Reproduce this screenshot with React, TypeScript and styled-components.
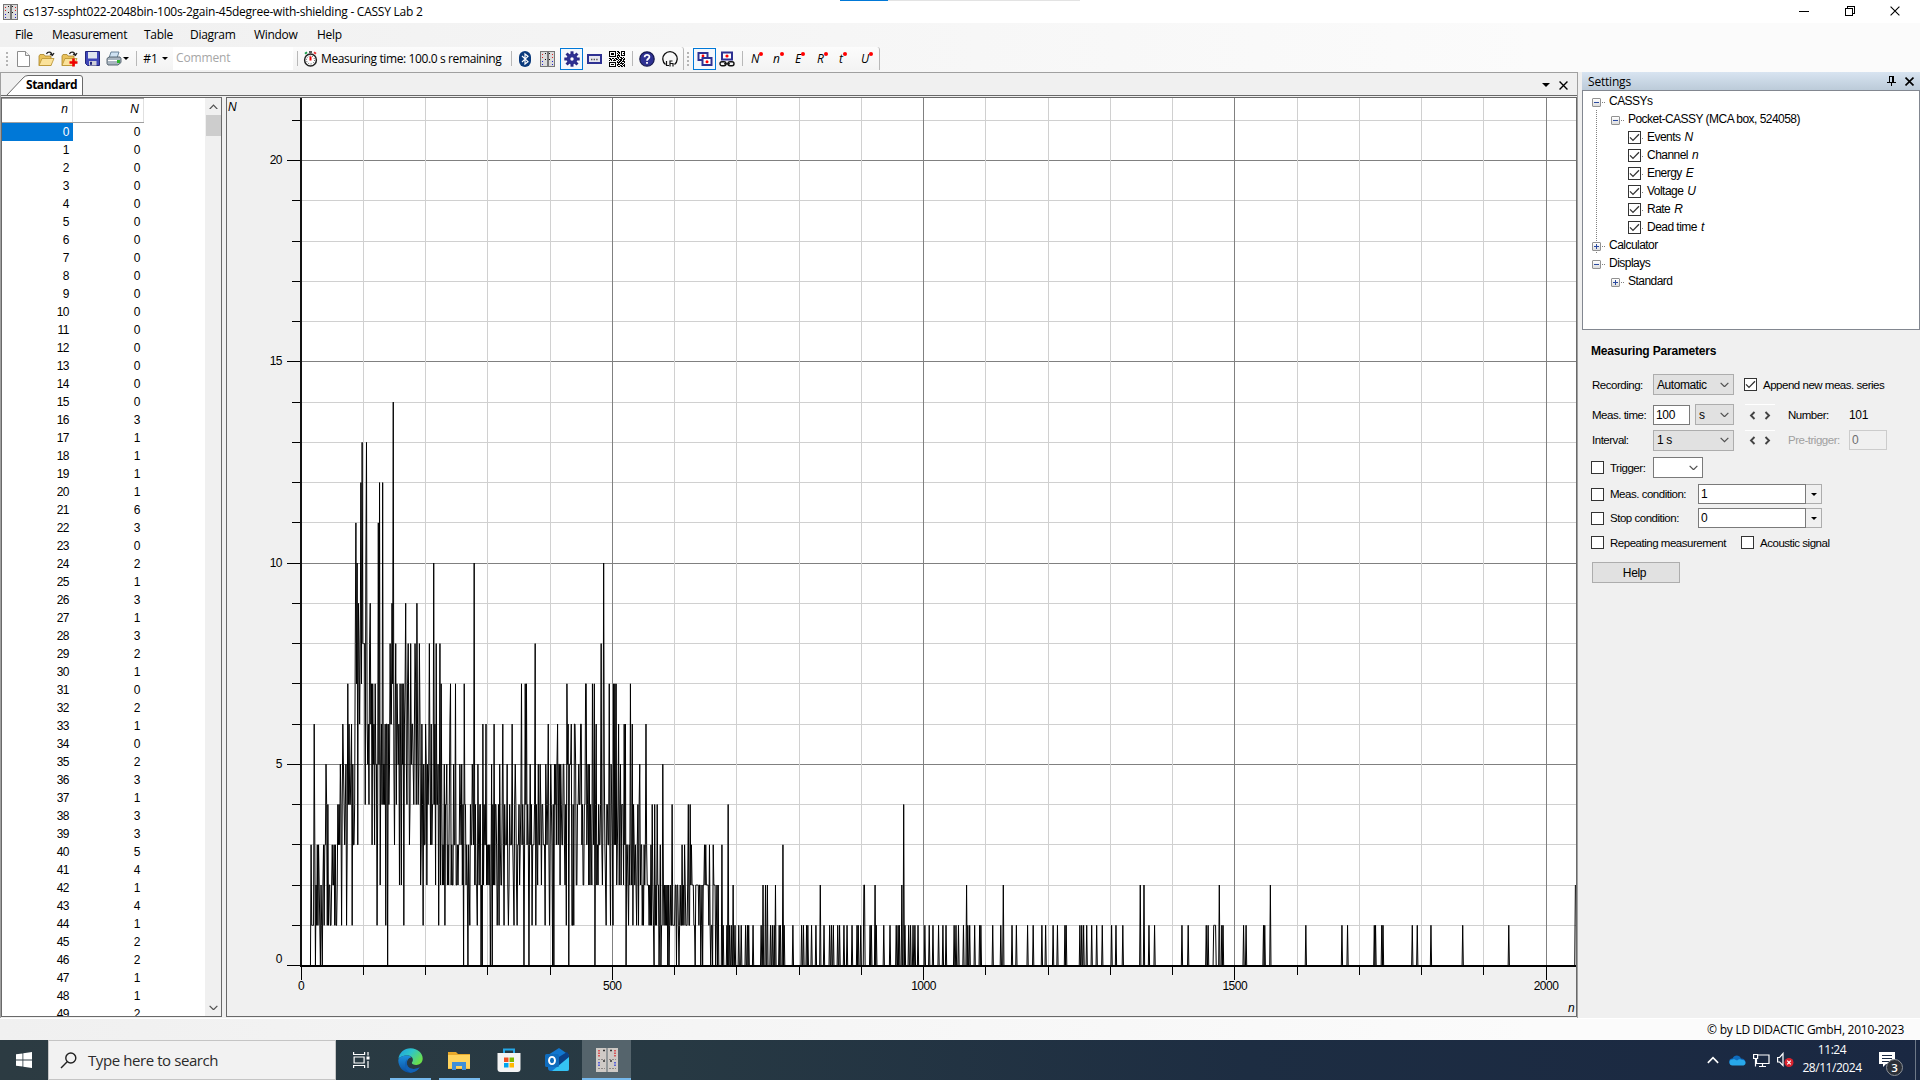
import React from "react";
import styled, { createGlobalStyle, css } from "styled-components";

const UI = `"Open Sans", "Noto Sans", sans-serif`;
const SANS = `"Liberation Sans", Arial, sans-serif`;

const Global = createGlobalStyle`
  html, body { margin: 0; padding: 0; }
  body { width: 1920px; height: 1080px; overflow: hidden; background: #f0f0f0; }
  * { box-sizing: border-box; }
  svg { flex: none; }
`;

/* ---------- spectrum data ---------- */

const firstCounts = [
  0, 0, 0, 0, 0, 0, 0, 0, 0, 0, 0, 0, 0, 0, 0, 0, 3, 1, 1, 1, 1, 6, 3, 0, 2, 1, 3, 1, 3, 2, 1, 0, 2, 1, 0, 2, 3, 1,
  3, 3, 5, 4, 1, 4, 1, 2, 2, 1, 1, 2,
];

type Strip = { origin: number; marks: [number, number[]][] };
const STEP = 1.868;

const strips: Strip[] = [
  {
    origin: -17.7,
    marks: [
      [14, [309]],
      [13, [216, 230]],
      [12, [212, 269, 277]],
      [11, [197, 265]],
      [10, [201, 227, 431, 552]],
      [9, [205, 240, 305, 346, 380]],
      [8, [223, 301, 317, 354, 362, 375, 388, 417, 439, 449, 735]],
      [0, [292, 521, 533, 572, 576, 601, 607, 701, 716, 788, 791, 836]],
      [7, [173, 247, 256, 331, 340, 453, 481, 496, 520, 695, 705, 709, 830, 886]],
      [1, [155, 169, 187, 261, 287, 341, 399, 446, 465, 540, 561, 621, 627, 642, 656, 671, 681, 726, 737, 765, 778, 829, 845, 851]],
      [6, [158, 177, 184, 285, 295, 322, 395, 407, 424, 434, 480, 578, 587, 613, 638, 666, 775, 803, 834, 843, 854, 871]],
      [5, [150, 273, 463, 470, 490, 509, 515, 547, 563, 604, 627, 652, 676, 720, 745, 750, 767, 808, 819, 895]],
      [2, [130, 271, 328, 334, 391, 410, 436, 451, 471, 484, 487, 499, 567, 580, 688, 743, 755, 811, 825, 859, 880, 897]],
      [3, [127, 145, 163, 190, 203, 246, 253, 313, 359, 403, 421, 459, 505, 545, 711, 760, 815, 875]],
      [4, [144, 162, 193, 225, 236, 276, 280, 297, 319, 350, 371, 385, 415, 428, 442, 527, 570, 583, 617, 643, 672, 733, 757, 795]],
    ],
  },
  {
    origin: 432,
    marks: [
      [10, [100]],
      [8, [93]],
      [7, [46, 67, 72, 117, 130, 135, 139, 182]],
      [0, [74, 168, 252, 267, 272, 293, 297, 320, 327, 375, 392, 397, 422, 427, 437, 442, 448, 452]],
      [6, [3, 14, 31, 79, 146, 162, 166, 186, 227]],
      [1, [6, 11, 109, 122, 128, 175, 189, 200, 206, 217, 220, 237, 260, 289, 303, 312, 349, 371]],
      [5, [56, 103, 124, 151, 210, 279]],
      [4, [8, 24, 35, 61, 77, 86, 112, 158, 189, 204, 208, 246, 253, 261, 307, 354, 360, 474]],
      [2, [20, 41, 60, 65, 80, 84, 98, 107, 140, 145, 153, 159, 233, 287, 315, 319, 330, 380, 388, 396, 411, 415, 435, 443, 490, 580, 587, 592, 617, 751, 882]],
      [3, [171, 215, 243, 271, 336, 343, 365, 403, 407, 419, 430, 455, 638]],
      [1, [460, 470, 478, 484, 495, 507, 513, 527, 532, 537, 549, 574, 602, 608, 613, 627, 631, 642, 668, 694, 700, 709, 713, 724, 737, 763, 779, 785, 791, 803, 809, 822, 831, 847, 861, 865]],
    ],
  },
  {
    origin: 897.5,
    marks: [
      [4, [132]],
      [2, [12, 46, 127, 321, 431, 841, 853, 1079]],
      [1, [2, 30, 34, 50, 72, 91, 110, 115, 119, 136, 146, 152, 159, 166, 175, 195, 208, 220, 237, 250, 259, 283, 288, 296, 311, 325, 330, 345, 359, 364, 398, 424, 457, 470, 503, 520, 546, 558, 580, 593, 616, 619, 661, 666, 672, 681, 696, 711, 727, 755, 768, 789, 867, 885, 967, 986, 1040, 1045, 1062, 1065]],
    ],
  },
  {
    origin: 1459.8,
    marks: [
      [2, [181, 1098]],
      [1, [12, 15, 35, 40, 102, 109, 161, 165, 288, 396, 413, 493, 497, 516, 520, 608, 622, 663, 759, 897]],
    ],
  },
];

/* [last channel, low, high] of the ordinary scatter between the marked counts */
const bands: [number, number, number][] = [
  [58, 1, 3],
  [66, 2, 4],
  [85, 3, 5],
  [113, 5, 8],
  [142, 4, 6],
  [192, 4, 7],
  [226, 3, 5],
  [262, 2, 4],
  [300, 2, 4],
  [352, 2, 4],
  [400, 3, 4],
  [450, 3, 5],
  [517, 3, 4],
  [560, 2, 3],
  [600, 1, 2],
  [668, 1, 2],
  [2048, 0, 0],
];

function buildSpectrum(): number[] {
  const counts: number[] = new Array(2048).fill(-1);
  firstCounts.forEach((v, i) => (counts[i] = v));
  strips.forEach((s) =>
    s.marks.forEach(([value, places]) =>
      places.forEach((p) => {
        let ch = Math.min(2047, Math.round(s.origin + p / STEP));
        if (counts[ch] !== -1 && ch < 2047) ch += 1;
        if (counts[ch] === -1) counts[ch] = value;
      })
    )
  );
  let seed = 7;
  for (let i = 0; i < counts.length; i++) {
    if (counts[i] !== -1) continue;
    const [, lo, hi] = bands.find((b) => i <= b[0])!;
    seed = (seed * 1103515245 + 12345) % 2147483648;
    counts[i] = lo + (Math.floor(seed / 65536) % (hi - lo + 1));
  }
  return counts;
}

const spectrum = buildSpectrum();
const px = (n: number) => 301 + 0.6225 * n;
const py = (v: number) => 965.5 - 40.24 * v;

/* ---------- window ---------- */

const Screen = styled.div`
  width: 1920px;
  height: 1080px;
  display: flex;
  flex-direction: column;
  background: #f0f0f0;
  color: #000;
  font: 12px ${UI};
  white-space: nowrap;
`;

const TitleBar = styled.div`
  height: 23px;
  background: #fff;
  display: flex;
  align-items: center;
  padding-left: 3px;
  position: relative;
`;
const Title = styled.span`
  margin-left: 5px;
  font-size: 12px;
  letter-spacing: -0.25px;
  line-height: 22px;
`;
const LoadMark = styled.div`
  position: absolute;
  left: 840px;
  top: 0;
  width: 240px;
  height: 1px;
  background: linear-gradient(90deg, #0078d7 48px, #e3e3e3 48px);
`;
const Captions = styled.div`
  margin-left: auto;
  display: flex;
  width: 138px;
  justify-content: space-between;
  padding: 0 20px 2px 17px;
`;

const MenuBar = styled.div`
  height: 24px;
  padding-bottom: 1px;
  background: linear-gradient(90deg, #f0f0f0, #fbfbfb 80%);
  display: flex;
  align-items: center;
`;
const MenuItem = styled.span<{ $w: number }>`
  width: ${(p) => p.$w}px;
  padding-left: 15px;
  letter-spacing: -0.3px;
`;

const ToolRow = styled.div`
  height: 25px;
  display: flex;
  background: linear-gradient(90deg, #f0f0f0, #fbfbfb 80%);
`;
const Strip = styled.div<{ $w: number }>`
  width: ${(p) => p.$w}px;
  height: 23px;
  display: flex;
  align-items: center;
  background: linear-gradient(#fcfcfc, #f3f3f3);
  border-right: 1px solid #b8b8b8;
  border-radius: 0 3px 0 0;
  > * { flex: none; }
`;
const Slot = styled.div<{ $w: number; $on?: boolean }>`
  width: ${(p) => p.$w}px;
  height: 22px;
  flex: none;
  display: flex;
  align-items: center;
  justify-content: center;
  ${(p) => p.$on && css`border: 1px solid #0078d7; background: #f4f8fc;`}
`;
const Grip = styled.div`
  width: 2px;
  height: 14px;
  margin: 0 10px 0 6px;
  background: repeating-linear-gradient(#b4b4b4 0 2px, transparent 2px 4px);
`;
const Divider = styled.div<{ $m: string }>`
  width: 1px;
  height: 15px;
  margin: ${(p) => p.$m};
  background: #b8b8b8;
`;
const Caret = styled.div`
  border: 3px solid transparent;
  border-top-color: #000;
  border-bottom: 0;
`;
const Comment = styled.div`
  width: 120px;
  height: 23px;
  padding-left: 3px;
  line-height: 22px;
  background: #fff;
  color: #a6a6a6;
  letter-spacing: -0.15px;
`;
const Timing = styled.div`
  width: 186px;
  margin-left: 3px;
  letter-spacing: -0.38px;
`;
const Quantity = styled.div`
  width: 22px;
  height: 20px;
  padding-left: 4px;
  display: flex;
  font: italic 12px/19px ${UI};
`;
const RedDot = styled.i`
  width: 4px;
  height: 4px;
  margin-top: 3px;
  border-radius: 50%;
  background: #f00;
`;

const Main = styled.div`
  height: 946px;
  display: flex;
`;
const Dock = styled.div`
  width: 1578px;
  border: 1px solid #a0a0a0;
  border-bottom: 0;
  display: flex;
  flex-direction: column;
`;
const Tabs = styled.div`
  height: 22px;
  display: flex;
  align-items: flex-end;
  padding-right: 9px;
`;
const Tab = styled.div`
  width: 82px;
  height: 20px;
  display: grid;
  > * { grid-area: 1 / 1; }
`;
const TabName = styled.b`
  padding-left: 25px;
  line-height: 20px;
  font-size: 12px;
  letter-spacing: -0.48px;
`;
const TabTools = styled.div`
  margin-left: auto;
  height: 20px;
  display: flex;
  align-items: center;
  gap: 9px;
`;
const Views = styled.div`
  height: 922px;
  border-top: 1px solid #696969;
  padding: 1px 0 0;
  display: flex;
  gap: 4px;
`;
const TablePane = styled.div`
  width: 221px;
  height: 920px;
  border: 1px solid #696969;
  background: #fff;
  display: flex;
  justify-content: space-between;
  overflow: hidden;
`;
const Grid = styled.div`
  width: 142px;
  overflow: hidden;
`;
const HeadRow = styled.div`
  height: 25px;
  display: flex;
  border-top: 1px solid #a0a0a0;
  border-bottom: 1px solid #a0a0a0;
`;
const HeadCell = styled.div`
  width: 71px;
  padding-right: 4px;
  border-right: 1px solid #e0e0e0;
  text-align: right;
  font: italic 12px/21px ${SANS};
`;
const Row = styled.div`
  height: 18px;
  display: flex;
`;
const Cell = styled.div<{ $sel?: boolean }>`
  width: 71px;
  padding-right: 4px;
  text-align: right;
  font: 12px/19px ${SANS};
  letter-spacing: -0.5px;
  color: ${(p) => (p.$sel ? "#fff" : "#000")};
  background: ${(p) => (p.$sel ? "#0078d7" : "transparent")};
`;
const Scroll = styled.div`
  width: 16px;
  background: #f0f0f0;
  display: flex;
  flex-direction: column;
  align-items: center;
  justify-content: space-between;
`;
const ScrollTop = styled.div`
  width: 16px;
  display: flex;
  flex-direction: column;
  align-items: center;
`;
const ScrollButton = styled.div`
  width: 15px;
  height: 17px;
  display: flex;
  align-items: center;
  justify-content: center;
`;
const Thumb = styled.div`
  width: 15px;
  height: 21px;
  background: #cdcdcd;
`;
const ChartPane = styled.div`
  width: 1351px;
  height: 920px;
  border: 1px solid #696969;
`;
const ChartSvg = styled.svg`
  display: block;
  text { font: 12px ${SANS}; letter-spacing: -0.5px; }
  text.unit { font-style: italic; }
`;

const Side = styled.div`
  width: 338px;
  margin-left: 4px;
  display: flex;
  flex-direction: column;
`;
const SideHead = styled.div`
  height: 18px;
  padding: 0 6px 0 6px;
  display: flex;
  align-items: center;
  background: linear-gradient(#d8e4f1, #bccbd9);
  letter-spacing: -0.2px;
`;
const SideTools = styled.div`
  margin-left: auto;
  display: flex;
  align-items: center;
  gap: 9px;
`;
const Tree = styled.div`
  height: 240px;
  padding-top: 1px;
  border: 1px solid #828790;
  background: #fff;
  font: 12px ${SANS};
`;
const Branch = styled.div<{ $level: number; $rail: boolean }>`
  height: 18px;
  padding-left: ${(p) => 9 + p.$level * 19 - (p.$level === 2 ? 2 : 0)}px;
  display: flex;
  align-items: center;
  letter-spacing: -0.53px;
  background: ${(p) =>
    p.$rail ? "repeating-linear-gradient(#808080 0 1px, #fff 1px 2px) 13px 0 / 1px 100% no-repeat" : "none"};
  em { margin-left: 4px; }
`;
const Expander = styled.div`
  width: 9px;
  height: 9px;
  margin-top: 3px;
  border: 1px solid #919191;
  border-radius: 1px;
  background: linear-gradient(#fff, #dcdcdc);
  display: flex;
`;
const Lead = styled.div<{ $w: number }>`
  width: ${(p) => p.$w}px;
  height: 1px;
  margin: 3px 4px 0 1px;
  background: repeating-linear-gradient(90deg, #808080 0 1px, #fff 1px 2px);
`;
const Box = styled.div`
  width: 13px;
  height: 13px;
  flex: none;
  border: 1px solid #333;
  background: #fff;
`;

const Form = styled.div`
  padding: 10px 0 0 9px;
  display: flex;
  flex-direction: column;
  font: 12px ${SANS};
  letter-spacing: -0.32px;
`;
const FormTitle = styled.b`
  height: 34px;
  line-height: 22px;
  letter-spacing: -0.17px;
`;
const Line = styled.div<{ $h: number; $gap: number }>`
  height: ${(p) => p.$h}px;
  margin-bottom: ${(p) => p.$gap}px;
  display: flex;
  align-items: center;
`;
const Label = styled.span<{ $w: number; $pad?: number; $off?: boolean }>`
  width: ${(p) => p.$w}px;
  flex: none;
  padding-left: ${(p) => p.$pad ?? 0}px;
  font-size: 11.5px;
  letter-spacing: -0.48px;
  color: ${(p) => (p.$off ? "#a0a0a0" : "#000")};
`;
const Select = styled.div<{ $w: number; $light?: boolean }>`
  width: ${(p) => p.$w}px;
  height: 21px;
  padding: 0 4px 0 3px;
  border: 1px solid ${(p) => (p.$light ? "#7a7a7a" : "#adadad")};
  background: ${(p) => (p.$light ? "#fff" : "#e1e1e1")};
  display: flex;
  align-items: center;
  justify-content: space-between;
  letter-spacing: -0.42px;
`;
const Field = styled.div<{ $w: number; $off?: boolean }>`
  width: ${(p) => p.$w}px;
  height: 20px;
  padding-left: 2px;
  line-height: 18px;
  border: 1px solid ${(p) => (p.$off ? "#cccccc" : "#7a7a7a")};
  background: ${(p) => (p.$off ? "#f0f0f0" : "#fff")};
  color: ${(p) => (p.$off ? "#6d6d6d" : "#000")};
`;
const Drop = styled.div`
  width: 16px;
  height: 20px;
  border: 1px solid #adadad;
  border-left: 0;
  display: flex;
  align-items: center;
  justify-content: center;
`;
const Spin = styled.div`
  width: 30px;
  height: 21px;
  margin: 0 13px 0 11px;
  border-top: 1px solid #fff;
  display: flex;
  align-items: center;
  justify-content: center;
`;
const Button = styled.div`
  width: 88px;
  height: 21px;
  margin-left: 1px;
  padding-right: 3px;
  border: 1px solid #adadad;
  background: #e1e1e1;
  text-align: center;
  line-height: 20px;
`;

const Status = styled.div`
  height: 22px;
  padding-right: 16px;
  border-top: 1px solid #fff;
  background: linear-gradient(90deg, #f0f0f0, #fbfbfb 80%);
  text-align: right;
  line-height: 22px;
  letter-spacing: -0.26px;
`;

const Taskbar = styled.div`
  height: 40px;
  display: flex;
  background: linear-gradient(90deg, #2c3b42, #273943 35%, #1d2d42 65%, #1a2842);
  color: #fff;
`;
const Start = styled.div`
  width: 48px;
  display: flex;
  align-items: center;
  justify-content: center;
`;
const Search = styled.div`
  width: 288px;
  border: 1px solid #c5c5c5;
  background: #f2f2f2;
  display: flex;
  align-items: center;
  gap: 11px;
  padding-left: 11px;
  color: #2b2b2b;
  font-size: 15px;
  letter-spacing: -0.42px;
`;
const TaskButton = styled.div<{ $w?: number; $open?: boolean; $active?: boolean }>`
  width: ${(p) => p.$w ?? 49}px;
  display: flex;
  align-items: center;
  justify-content: center;
  background: ${(p) => (p.$active ? "#55646c" : "transparent")};
  box-shadow: ${(p) => (p.$active ? "inset 0 -2px #76b9ed" : "none")};
  ${(p) =>
    p.$open &&
    css`background: linear-gradient(#76b9ed, #76b9ed) 4px 100% / 41px 2px no-repeat;`}
`;
const Tray = styled.div`
  margin-left: auto;
  display: flex;
  align-items: center;
`;
const TrayIcon = styled.div<{ $w: number }>`
  width: ${(p) => p.$w}px;
  display: flex;
`;
const Clock = styled.div`
  width: 70px;
  text-align: center;
  font-size: 12px;
  line-height: 18px;
  letter-spacing: -0.45px;
  padding-bottom: 2px;
`;
const Notice = styled.div`
  width: 49px;
  padding-left: 12px;
  height: 40px;
  border-right: 1px solid #6d7887;
  margin-right: 4px;
`;

/* ---------- icons ---------- */

const DeviceIcon = ({ w, h }: { w: number; h: number }) => (
  <svg width={w} height={h} viewBox="0 0 15 16" shapeRendering="crispEdges">
    <rect x=".5" y=".5" width="6.5" height="15" fill="#dcdcdc" stroke="#777" />
    <rect x="8" y=".5" width="6.5" height="15" fill="#dcdcdc" stroke="#777" />
    <path d="M2.5 3v6M12.5 3v6" stroke="#d22" strokeDasharray="1 2" />
    <path d="M2.5 10v4M12.5 10v4" stroke="#22c" strokeDasharray="1 2" />
    <path d="M5 2.5h1M9 2.5h1M5 8.5h1M9 8.5h1" stroke="#111" />
  </svg>
);

const DeviceLarge = () => (
  <svg width="22" height="24" viewBox="0 0 22 24">
    <rect width="10.500" height="24" fill="#cfcac6" />
    <rect x="11.500" width="10.500" height="24" fill="#cfcac6" />
    <path d="M3 2v7M19 2v7" stroke="#d8565a" strokeWidth="2" strokeDasharray="1.500 1" />
    <path d="M3 14v4M19 14v4" stroke="#5a62d8" strokeWidth="2" strokeDasharray="1.500 1" />
    <path d="M2 11.500h7M13 11.500h7M2 20.500h7M13 20.500h7" stroke="#8d8885" strokeWidth="1.200" strokeDasharray="2 1" />
    <path d="M7 2.500h2M14 2.500h2M7 13h2M14 13h2" stroke="#333" strokeWidth="1.500" />
  </svg>
);

const Cross = ({ s = 9, w = 1.6 }: { s?: number; w?: number }) => (
  <svg width={s} height={s} viewBox="0 0 10 10">
    <path d="M.6.6l8.800 8.800M9.400.6L.6 9.400" stroke="#000" strokeWidth={w} />
  </svg>
);

const Chevron = ({ up = false, color = "#505050", w = 9 }: { up?: boolean; color?: string; w?: number }) => (
  <svg width={w} height={w * 0.66} viewBox="0 0 9 6">
    <path d={up ? "M.6 5.200L4.500 1.200l3.900 4" : "M.6.8l3.900 4 3.900-4"} fill="none" stroke={color} strokeWidth="1.200" />
  </svg>
);

const TickSvg = styled.svg`
  display: block;
`;
const Tick = () => (
  <TickSvg width="11" height="11" viewBox="0 0 11 11">
    <path d="M1 5.400l3 3L10 2.200" fill="none" stroke="#333" strokeWidth="1.300" />
  </TickSvg>
);

const Folder = ({ plus }: { plus?: boolean }) => (
  <svg width="17" height="16" viewBox="0 0 17 16">
    <path d="M1 14.500V5l1-1.500h4l1 1.500h6v9.500z" fill="#e9c25c" stroke="#a98426" strokeWidth=".8" />
    <path d="M1 14.500L4 7.500h12l-3 7z" fill="#fbe29a" stroke="#b8922f" strokeWidth=".8" />
    <path d="M8.500 3c1-2.600 5-2.600 5.500.8M12 3l2.400 1.400L16 2" fill="none" stroke="#222" strokeWidth="1.300" />
    {plus && <path d="M12.500 7.500v8M8.500 11.500h8" stroke="#e00" strokeWidth="2.600" />}
  </svg>
);

const qrRows = [
  "1111111011001111", "1000001001101001", "1011101010101011", "1011101001001001", "1000001011101111",
  "1111111010100000", "0000000011011010", "1101101101001101", "0110010110111011", "1010111001011010",
  "0000000010110111", "1111111011101001", "1000001001011110", "1011101011100101", "1000001010011011",
  "1111111001101101",
];

const QrIcon = () => (
  <svg width="16" height="16" viewBox="0 0 16 16" shapeRendering="crispEdges">
    {qrRows.map((r, y) => r.split("").map((c, x) => (c === "1" ? <rect key={`${x}-${y}`} x={x} y={y} width="1" height="1" /> : null)))}
  </svg>
);

const Gear = () => (
  <svg width="16" height="16" viewBox="-8 -8 16 16">
    {[0, 45, 90, 135].map((a) => (
      <rect key={a} x="-1.500" y="-7.700" width="3" height="15.400" fill="#2b2b86" transform={`rotate(${a})`} />
    ))}
    <circle r="5.400" fill="#2e3192" />
    <circle r="1.700" fill="#fff" />
  </svg>
);

const CascadeWindows = () => (
  <svg width="16" height="16" viewBox="0 0 16 16">
    <rect x="1.500" y="2" width="9" height="7" fill="#fff" stroke="#2e3192" strokeWidth="2" />
    <circle cx="6" cy="5" r="1.400" fill="#f00" />
    <rect x="5.500" y="7" width="9" height="7" fill="#fff" stroke="#2e3192" strokeWidth="2" />
    <circle cx="10" cy="10.800" r="1.500" fill="#f00" />
  </svg>
);

const LinkedWindow = () => (
  <svg width="16" height="16" viewBox="0 0 16 16">
    <rect x="3" y="1.500" width="10" height="7" fill="#fff" stroke="#2e3192" strokeWidth="2" />
    <circle cx="8" cy="5" r="1.600" fill="#f00" />
    <rect x="1" y="10.800" width="6" height="4" rx="2" fill="none" stroke="#111" strokeWidth="1.400" />
    <rect x="9" y="10.800" width="6" height="4" rx="2" fill="none" stroke="#111" strokeWidth="1.400" />
    <path d="M5 12.800h6" stroke="#111" strokeWidth="1.300" />
  </svg>
);

/* ---------- parts ---------- */

const NarrowGrip = styled(Grip)`
  margin: 0 4px 0 3px;
`;
const TabCaret = styled(Caret)`
  border-width: 4px 4px 0;
`;

const Toolbar = () => (
  <ToolRow>
    <Strip $w={684}>
      <Grip />
      <Slot $w={11}>
        <svg width="13" height="16" viewBox="0 0 13 16">
          <path d="M.5.5h8l4 4v11H.5z" fill="#fff" stroke="#8c8c8c" />
          <path d="M8.500.5v4h4" fill="#eee" stroke="#8c8c8c" />
        </svg>
      </Slot>
      <Slot $w={34}><Folder /></Slot>
      <Slot $w={12}><Folder plus /></Slot>
      <Slot $w={34}>
        <svg width="15" height="15" viewBox="0 0 15 15">
          <path d="M.5.5h14v14h-12l-2-2z" fill="#3f46b8" stroke="#23277c" />
          <rect x="3" y="1" width="9" height="6.500" fill="#dfe6ef" />
          <rect x="4" y="10" width="7.500" height="4.500" fill="#cfcfd8" />
          <rect x="5" y="10.800" width="2" height="3" fill="#23277c" />
        </svg>
      </Slot>
      <Slot $w={9}>
        <svg width="16" height="15" viewBox="0 0 16 15">
          <path d="M5 1h8l-2 6H3z" fill="#cfe2f2" stroke="#5d7890" strokeWidth=".9" />
          <path d="M1 7.500L3 6h11l1 1.500v4L12 14H2l-1-1.500z" fill="#a9b5c0" stroke="#4c5b68" strokeWidth=".9" />
          <path d="M2 9.500h9" stroke="#fff" />
          <rect x="11" y="9" width="3" height="3" fill="#2fb52f" />
        </svg>
      </Slot>
      <Slot $w={16}><Caret /></Slot>
      <Divider $m="0 7px 0 2px" />
      <Slot $w={13}>#1</Slot>
      <Slot $w={16}><Caret /></Slot>
      <Comment>Comment</Comment>
      <Divider $m="0 5px 0 4px" />
      <Slot $w={15}>
        <svg width="15" height="16" viewBox="0 0 15 16">
          <circle cx="7.500" cy="9" r="5.900" fill="#fff" stroke="#222" strokeWidth="1.500" />
          <circle cx="7.500" cy="9" r="4" fill="none" stroke="#444" strokeWidth="1" strokeDasharray="1 1.500" />
          <path d="M7.500 9.500v-4" stroke="#e00" strokeWidth="2" />
          <path d="M6 1h3" stroke="#333" strokeWidth="1.600" />
          <path d="M2 2.800l2-1.600" stroke="#1a9c4a" strokeWidth="1.800" />
          <path d="M13 2.800l-2-1.600" stroke="#e33" strokeWidth="1.800" />
        </svg>
      </Slot>
      <Timing>Measuring time: 100.0 s remaining</Timing>
      <Divider $m="0 3px 0 4px" />
      <Slot $w={20}>
        <svg width="12" height="16" viewBox="0 0 12 16">
          <rect width="12" height="16" rx="6" fill="#0a3a7c" />
          <path d="M3 5l6 5.600L6 13V3l3 2.400L3 11" fill="none" stroke="#fff" strokeWidth="1.200" />
        </svg>
      </Slot>
      <Slot $w={25}><DeviceIcon w={15} h={16} /></Slot>
      <Slot $w={23} $on><Gear /></Slot>
      <Slot $w={23}>
        <svg width="15" height="10" viewBox="0 0 15 10">
          <rect x="1" y="1" width="13" height="8" fill="#e6e6ef" stroke="#2e3192" strokeWidth="2" />
          <path d="M4 5.500h7" stroke="#555" strokeWidth="1.400" strokeDasharray="1.400 1.200" />
        </svg>
      </Slot>
      <Slot $w={22}><QrIcon /></Slot>
      <Divider $m="0 3px 0 4px" />
      <Slot $w={22}>
        <svg width="16" height="16" viewBox="0 0 16 16">
          <circle cx="8" cy="8" r="7.200" fill="#2e3192" stroke="#15184f" strokeWidth="1.200" />
          <path d="M5.600 6.200c0-3.200 5-3 4.800-.2C10.300 7.800 8 7.800 8 9.800M8 11v1.800" fill="none" stroke="#fff" strokeWidth="1.800" />
        </svg>
      </Slot>
      <Slot $w={23}>
        <svg width="16" height="16" viewBox="0 0 16 16">
          <path d="M3.500 13.500A7.200 7.200 0 1 1 12.500 13.500" fill="none" stroke="#111" strokeWidth="1.300" />
          <path d="M4.500 10v5M4.500 14.500h2.500M8 15.500v-5.500h2.500M8.500 12.500h2.500v3" fill="none" stroke="#111" strokeWidth="1.200" />
        </svg>
      </Slot>
    </Strip>
    <Strip $w={196}>
      <NarrowGrip />
      <Slot $w={23} $on><CascadeWindows /></Slot>
      <Slot $w={22}><LinkedWindow /></Slot>
      <Divider $m="0 4px 0 4px" />
      {["N", "n", "E", "R", "t", "U"].map((q) => (
        <Quantity key={q}>{q}<RedDot /></Quantity>
      ))}
    </Strip>
  </ToolRow>
);

const Chart = () => {
  const hundreds = Array.from({ length: 21 }, (_, i) => i);
  const units = Array.from({ length: 22 }, (_, i) => i);
  const line = spectrum.map((v, i) => `${px(i + 0.2).toFixed(2)},${py(v).toFixed(1)}`).join(" ");
  return (
    <ChartSvg width="1349" height="918" viewBox="227 98 1349 918">
      <rect x="227" y="98" width="1349" height="918" fill="#f0f0f0" />
      <rect x="302" y="98" width="1274" height="867" fill="#fff" />
      <g shapeRendering="crispEdges">
        {units.map((v) => {
          const y = Math.floor(py(v)) + 0.5;
          return <path key={v} d={`M302 ${y}H1576`} stroke={v % 5 ? "#d0d0d0" : "#808080"} />;
        })}
        {hundreds.map((h) => {
          const x = Math.floor(px(h * 100)) + 0.5;
          return <path key={h} d={`M${x} 98V965`} stroke={h % 5 ? "#d0d0d0" : "#808080"} />;
        })}
        {units.map((v) => {
          const y = Math.floor(py(v)) + 0.5;
          return <path key={v} d={`M${v % 5 ? 292 : 287} ${y}H301`} stroke="#000" />;
        })}
        {hundreds.map((h) => {
          const x = Math.floor(px(h * 100)) + 0.5;
          return <path key={h} d={`M${x} 966V${h % 5 ? 975 : 980}`} stroke="#000" />;
        })}
        <path d="M301 98V966" stroke="#111" strokeWidth="2" />
        <path d="M300 966H1576" stroke="#000" strokeWidth="2" />
      </g>
      <polyline points={line} fill="none" stroke="#000" strokeWidth="1" strokeLinejoin="bevel" />
      {[0, 5, 10, 15, 20].map((v) => (
        <text key={v} x="282" y={v ? py(v) + 3.5 : 963} textAnchor="end">{v}</text>
      ))}
      {[0, 500, 1000, 1500, 2000].map((n) => (
        <text key={n} x={px(n)} y="990" textAnchor="middle">{n}</text>
      ))}
      <text className="unit" x="228" y="111">N</text>
      <text className="unit" x="1568" y="1012">n</text>
    </ChartSvg>
  );
};

const Expand = ({ plus }: { plus?: boolean }) => (
  <Expander>
    <svg width="7" height="7" viewBox="0 0 7 7" shapeRendering="crispEdges">
      <path d={plus ? "M1 3.500h5M3.500 1v5" : "M1 3.500h5"} stroke="#2b4aa0" />
    </svg>
  </Expander>
);

const quantities: [string, string][] = [
  ["Events", "N"], ["Channel", "n"], ["Energy", "E"], ["Voltage", "U"], ["Rate", "R"], ["Dead time", "t"],
];

const Arrows = () => (
  <Spin>
    <svg width="22" height="9" viewBox="0 0 22 9">
      <path d="M5.500 1L2 4.500 5.500 8M16.500 1L20 4.500 16.500 8" fill="none" stroke="#444" strokeWidth="1.900" />
    </svg>
  </Spin>
);

const Settings = () => (
  <Side>
    <SideHead>
      Settings
      <SideTools>
        <svg width="9" height="10" viewBox="0 0 9 10" shapeRendering="crispEdges">
          <path d="M2.500 0v6M6 0v6M2 .5h5M0 6.500h9M4.500 7v3" stroke="#000" />
          <path d="M6 0v6" stroke="#000" strokeWidth="2" />
        </svg>
        <Cross s={9} w={1.8} />
      </SideTools>
    </SideHead>
    <Tree>
      <Branch $level={0} $rail={false}><Expand /><Lead $w={3} />CASSYs</Branch>
      <Branch $level={1} $rail><Expand /><Lead $w={3} />Pocket-CASSY (MCA box, 524058)</Branch>
      {quantities.map(([name, sym]) => (
        <Branch key={name} $level={2} $rail>
          <Box><Tick /></Box><Lead $w={1} />{name}<em>{sym}</em>
        </Branch>
      ))}
      <Branch $level={0} $rail><Expand plus /><Lead $w={3} />Calculator</Branch>
      <Branch $level={0} $rail={false}><Expand /><Lead $w={3} />Displays</Branch>
      <Branch $level={1} $rail={false}><Expand plus /><Lead $w={3} />Standard</Branch>
    </Tree>
    <Form>
      <FormTitle>Measuring Parameters</FormTitle>
      <Line $h={21} $gap={9}>
        <Label $w={62} $pad={1}>Recording:</Label>
        <Select $w={81}>Automatic<Chevron /></Select>
        <Label $w={10} />
        <Box><Tick /></Box>
        <Label $w={150} $pad={6}>Append new meas. series</Label>
      </Line>
      <Line $h={21} $gap={4}>
        <Label $w={62} $pad={1}>Meas. time:</Label>
        <Field $w={37}>100</Field>
        <Label $w={5} />
        <Select $w={39}>s<Chevron /></Select>
        <Arrows />
        <Label $w={61}>Number:</Label>
        <span>101</span>
      </Line>
      <Line $h={22} $gap={6}>
        <Label $w={62} $pad={1}>Interval:</Label>
        <Select $w={81}>1 s<Chevron /></Select>
        <Arrows />
        <Label $w={61} $off>Pre-trigger:</Label>
        <Field $w={38} $off>0</Field>
      </Line>
      <Line $h={21} $gap={6}>
        <Box />
        <Label $w={49} $pad={6}>Trigger:</Label>
        <Select $w={50} $light><span /><Chevron /></Select>
      </Line>
      <Line $h={20} $gap={4}>
        <Box />
        <Label $w={94} $pad={6}>Meas. condition:</Label>
        <Field $w={108}>1</Field>
        <Drop><Caret /></Drop>
      </Line>
      <Line $h={20} $gap={5}>
        <Box />
        <Label $w={94} $pad={6}>Stop condition:</Label>
        <Field $w={108}>0</Field>
        <Drop><Caret /></Drop>
      </Line>
      <Line $h={19} $gap={10}>
        <Box />
        <Label $w={137} $pad={6}>Repeating measurement</Label>
        <Box />
        <Label $w={100} $pad={6}>Acoustic signal</Label>
      </Line>
      <Button>Help</Button>
    </Form>
  </Side>
);

const TaskIcons = () => (
  <>
    <TaskButton $w={50}>
      <svg width="17" height="16" viewBox="0 0 17 16">
        <path d="M.6 0v2.500h11V0M.6 16v-2.500h11V16M1.100 5h10v6H1.100zM15 0v3.500M15 9v7" fill="none" stroke="#fff" strokeWidth="1.200" />
        <rect x="13.500" y="4.500" width="3" height="3" fill="#fff" />
      </svg>
    </TaskButton>
    <TaskButton $open>
      <svg width="25" height="25" viewBox="0 0 24 24">
        <defs>
          <linearGradient id="eg" x1="0" y1="0" x2="1" y2=".6">
            <stop offset="0" stopColor="#1b9de2" /><stop offset=".5" stopColor="#2fc5c8" /><stop offset="1" stopColor="#6be04a" />
          </linearGradient>
          <linearGradient id="eb" x1="0" y1="0" x2="0" y2="1">
            <stop offset="0" stopColor="#1c8fdd" /><stop offset="1" stopColor="#0b4fa0" />
          </linearGradient>
        </defs>
        <path d="M.3 11C1 4.500 6 .3 12 .3c7 0 11.700 4.900 11.700 9.700 0 4-3 6.200-6.200 6.200-2.700 0-4.200-1-4.200-1.900 0-.8 1-1 1-3 0-2.300-2.300-4-5.300-4C4.500 7.300 1 9 .3 11z" fill="url(#eg)" />
        <path d="M.3 11.500C1 8.800 4.500 7.300 8.500 7.300c2 0 3.500.5 4.500 1.500-3 .5-4.500 3-4.500 5.700 0 5 5.500 7.500 12 4.300C18 22.500 15 23.700 12 23.700 5 23.700 0 18 .3 11.500z" fill="url(#eb)" />
        <path d="M8.500 14.500c0 5 5.500 7.500 12.500 4-2.500 3.800-5.500 5-9 5.200-5-2-7-8-3.500-13-.2 1.300 0 2.500 0 3.800z" fill="#1261b5" />
      </svg>
    </TaskButton>
    <TaskButton $open>
      <svg width="23" height="19" viewBox="0 0 23 19">
        <path d="M0 1h8l2 2h12v15H0z" fill="#e8a92b" />
        <rect y="4" width="22" height="13.500" fill="#ffd45e" />
        <path d="M4 19v-8h14v8h-4v-4H8v4z" fill="#3f8fd8" />
      </svg>
    </TaskButton>
    <TaskButton>
      <svg width="24" height="25" viewBox="0 0 24 25">
        <path d="M7 5V1.500h10V5" fill="none" stroke="#25a8e8" strokeWidth="2" />
        <path d="M.5 5h23v16q0 3-3 3h-17q-3 0-3-3z" fill="#f4f4f4" />
        <rect x="7" y="9.500" width="4.500" height="4.500" fill="#f25022" /><rect x="12.500" y="9.500" width="4.500" height="4.500" fill="#7fba00" />
        <rect x="7" y="15" width="4.500" height="4.500" fill="#00a4ef" /><rect x="12.500" y="15" width="4.500" height="4.500" fill="#ffb900" />
      </svg>
    </TaskButton>
    <TaskButton>
      <svg width="25" height="24" viewBox="0 0 25 24">
        <path d="M3 7L14 0l10 7v14q0 2-2 2H6q-3 0-3-3z" fill="#1277cf" />
        <path d="M9 12L22 4l2 3v5L12 20z" fill="#0a3f86" />
        <path d="M24 9v12q0 2-2 2H7z" fill="#35c3f3" />
        <rect x="0" y="6" width="14" height="13" rx="1.500" fill="#0f6cbd" />
        <ellipse cx="7" cy="12.500" rx="3" ry="3.600" fill="none" stroke="#fff" strokeWidth="1.900" />
      </svg>
    </TaskButton>
    <TaskButton $active><DeviceLarge /></TaskButton>
  </>
);

export default function App() {
  return (
    <Screen>
      <Global />
      <TitleBar>
        <LoadMark />
        <DeviceIcon w={15} h={16} />
        <Title>cs137-sspht022-2048bin-100s-2gain-45degree-with-shielding - CASSY Lab 2</Title>
        <Captions>
          <svg width="10" height="10"><path d="M0 5.500h10" stroke="#000" /></svg>
          <svg width="10" height="10" viewBox="0 0 10 10" fill="none" stroke="#000" shapeRendering="crispEdges">
            <rect x=".5" y="2.500" width="7" height="7" /><path d="M2.500 2V.5h7v7H8" />
          </svg>
          <Cross s={10} w={1.1} />
        </Captions>
      </TitleBar>
      <MenuBar>
        <MenuItem $w={37}>File</MenuItem>
        <MenuItem $w={92}>Measurement</MenuItem>
        <MenuItem $w={46}>Table</MenuItem>
        <MenuItem $w={64}>Diagram</MenuItem>
        <MenuItem $w={63}>Window</MenuItem>
        <MenuItem $w={50}>Help</MenuItem>
      </MenuBar>
      <Toolbar />
      <Main>
        <Dock>
          <Tabs>
            <Tab>
              <svg width="82" height="20" viewBox="0 0 82 20">
                <path d="M6 20L22 3q2-2.500 5-2.500h52q2.500 0 2.500 2.500v17" fill="#fff" stroke="#696969" />
              </svg>
              <TabName>Standard</TabName>
            </Tab>
            <TabTools><TabCaret /><Cross s={9} w={1.5} /></TabTools>
          </Tabs>
          <Views>
            <TablePane>
              <Grid>
                <HeadRow><HeadCell>n</HeadCell><HeadCell>N</HeadCell></HeadRow>
                {firstCounts.map((v, i) => (
                  <Row key={i}><Cell $sel={i === 0}>{i}</Cell><Cell>{v}</Cell></Row>
                ))}
              </Grid>
              <Scroll>
                <ScrollTop>
                  <ScrollButton><Chevron up /></ScrollButton>
                  <Thumb />
                </ScrollTop>
                <ScrollButton><Chevron /></ScrollButton>
              </Scroll>
            </TablePane>
            <ChartPane><Chart /></ChartPane>
          </Views>
        </Dock>
        <Settings />
      </Main>
      <Status>© by LD DIDACTIC GmbH, 2010-2023</Status>
      <Taskbar>
        <Start>
          <svg width="16" height="16" viewBox="0 0 16 16" fill="#fff">
            <path d="M0 2.300l6.500-.9v6.100H0zM7.300 1.300L16 0v7.500H7.300zM0 8.400h6.500v6.200L0 13.700zM7.300 8.400H16V16l-8.700-1.300z" />
          </svg>
        </Start>
        <Search>
          <svg width="17" height="17" viewBox="0 0 17 17" fill="none" stroke="#222" strokeWidth="1.400">
            <circle cx="10.800" cy="6" r="5" /><path d="M7.200 9.800L1 16" />
          </svg>
          Type here to search
        </Search>
        <TaskIcons />
        <Tray>
          <TrayIcon $w={22}><Chevron up color="#fff" w={12} /></TrayIcon>
          <TrayIcon $w={24}>
            <svg width="17" height="11" viewBox="0 0 17 11">
              <path d="M3 9.500a3 3 0 0 1 .5-6C5-.5 10.500-.5 12 3.500c3 0 4.500 2 4.500 4l-8 1z" fill="#0f6cbd" />
              <path d="M3.500 10.500a3 3 0 0 1 0-6c2-.5 3 .5 4.500 1 2-2 4-1.500 5-.5 3 0 3.800 2 3.500 3.500-.5 1.500-1.500 2-3 2z" fill="#28a8ea" />
            </svg>
          </TrayIcon>
          <TrayIcon $w={24}>
            <svg width="17" height="15" viewBox="0 0 17 15" fill="none" stroke="#fff" strokeWidth="1.200">
              <path d="M5 2h11v8.500H3.500V6M9.500 10.500V13M6 13.500h7M.6 1.500h4v4h-4zM2.500 5.500v8" />
            </svg>
          </TrayIcon>
          <TrayIcon $w={20}>
            <svg width="17" height="16" viewBox="0 0 17 16">
              <path d="M.6 5.500h2L6 1.500v12L2.600 10h-2z" fill="none" stroke="#fff" strokeWidth="1.200" />
              <circle cx="12" cy="10.500" r="4.500" fill="#d9232e" />
              <path d="M10.200 8.700l3.600 3.600M13.800 8.700l-3.600 3.600" stroke="#fff" strokeWidth="1.200" />
            </svg>
          </TrayIcon>
          <Clock>11:24<br />28/11/2024</Clock>
          <Notice>
            <svg width="28" height="40" viewBox="0 0 28 40">
              <path d="M0 12h16v12H7l-3 3v-3H0z" fill="#fff" />
              <path d="M3 15.500h10M3 18.500h10M3 21.500h7" stroke="#1b2a44" />
              <circle cx="15.500" cy="27.500" r="8" fill="#2b3038" stroke="#8d9299" />
              <text x="15.500" y="31.500" textAnchor="middle" fill="#fff" fontSize="11.500" fontWeight="600">3</text>
            </svg>
          </Notice>
        </Tray>
      </Taskbar>
    </Screen>
  );
}
